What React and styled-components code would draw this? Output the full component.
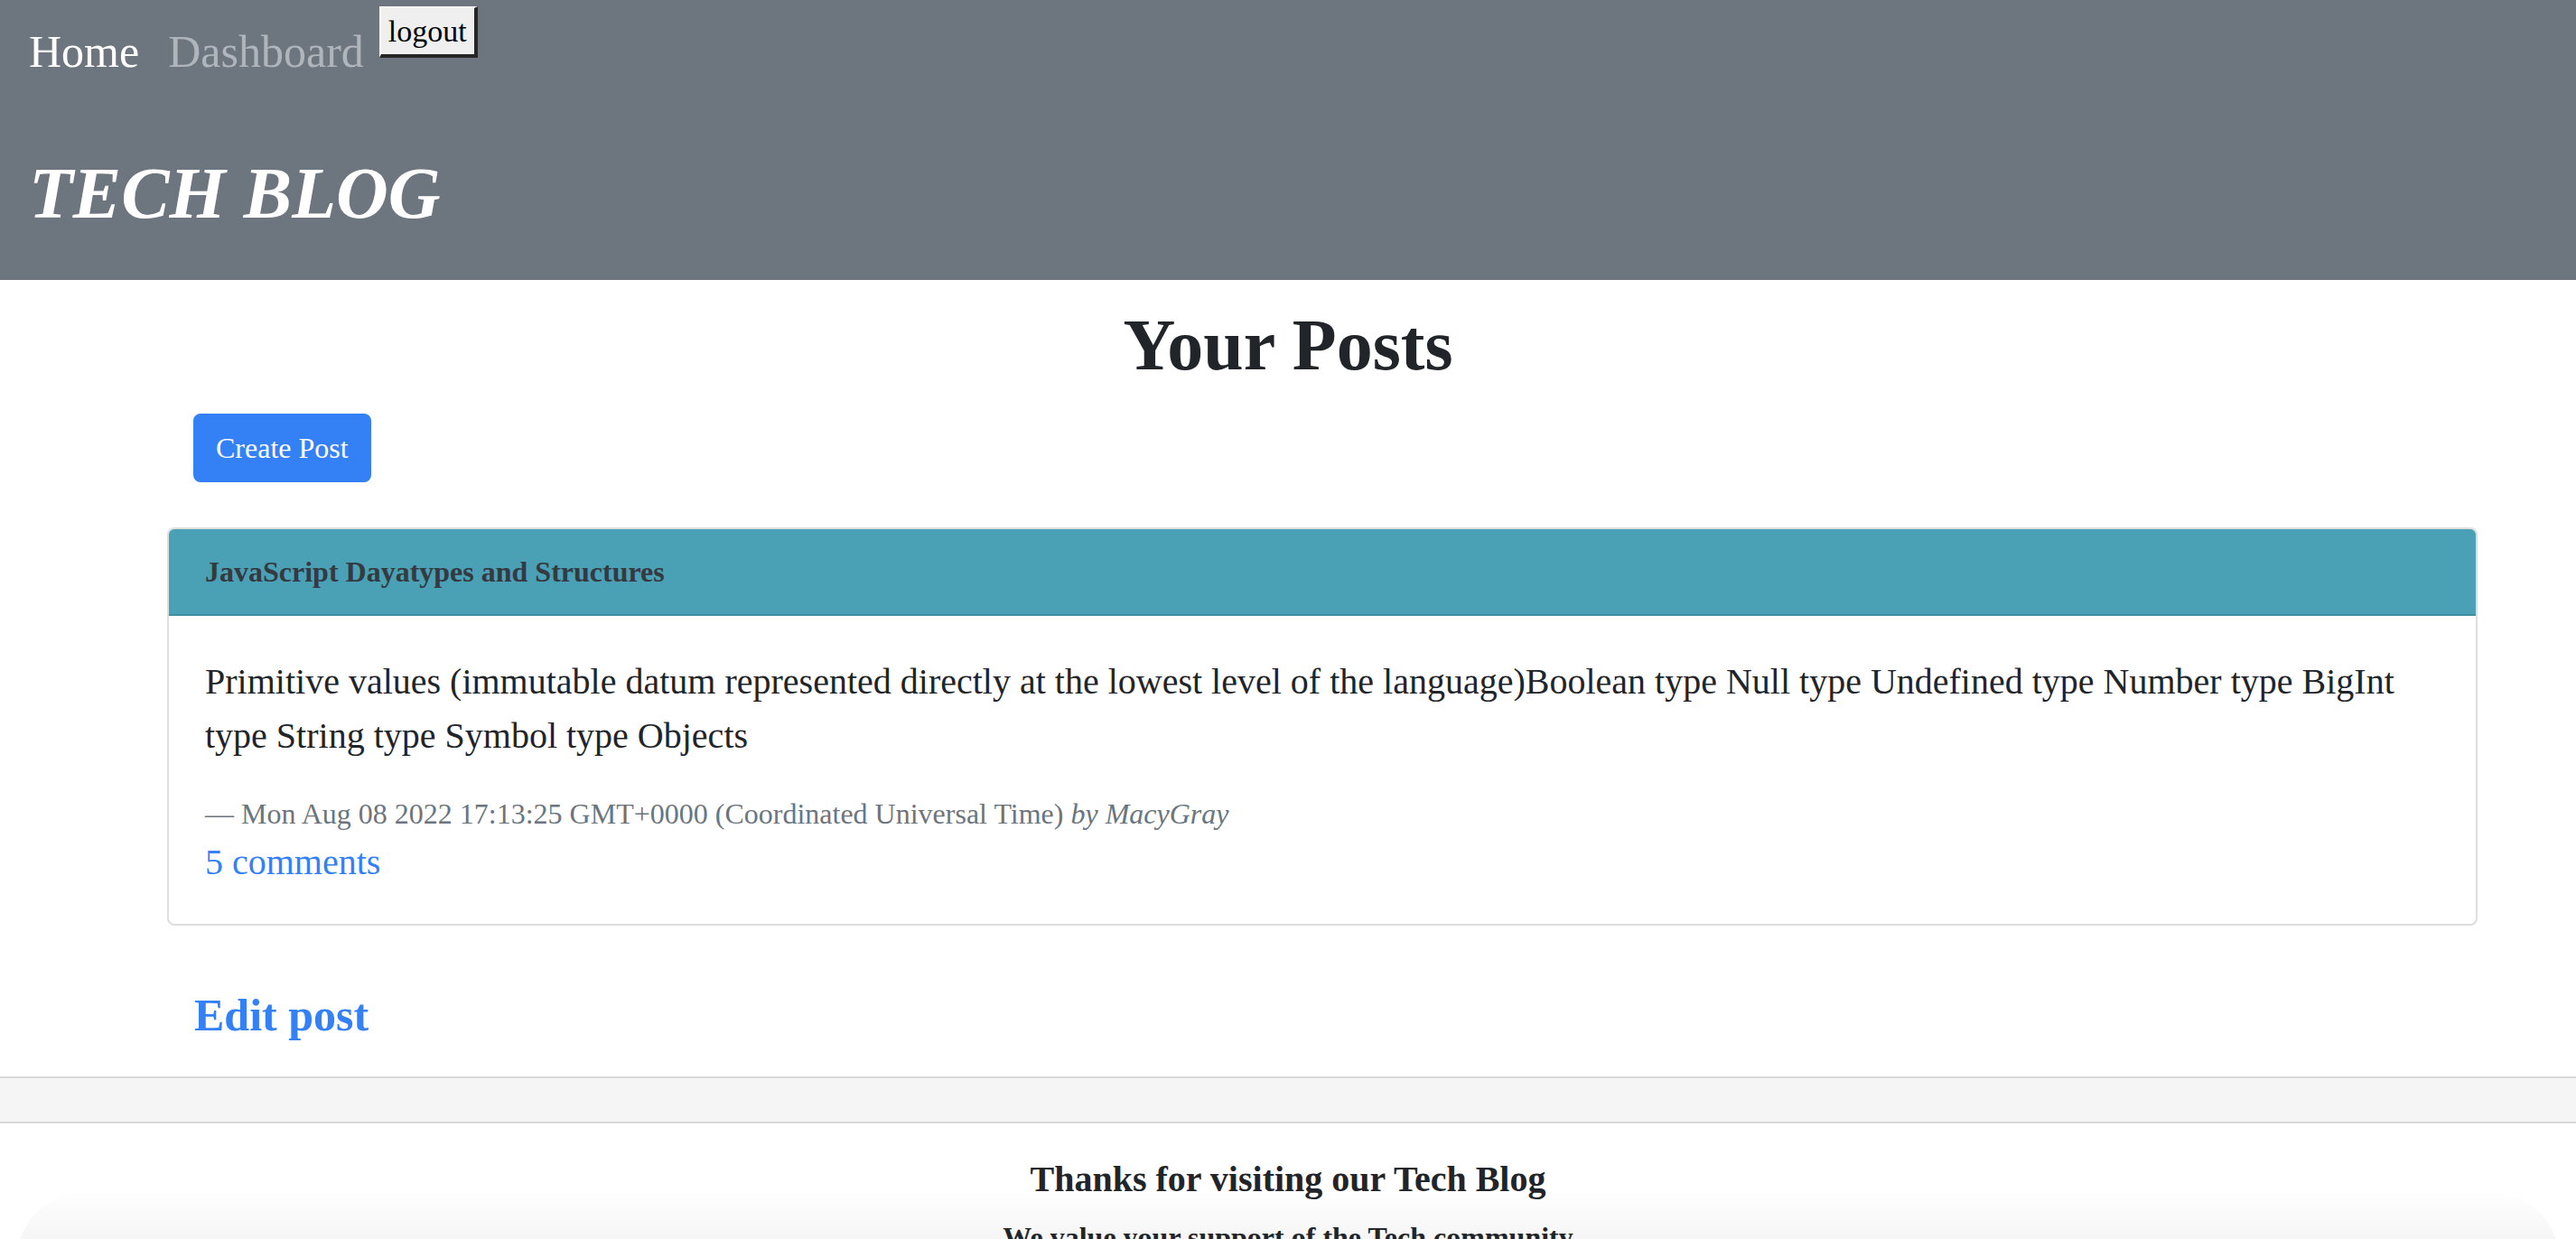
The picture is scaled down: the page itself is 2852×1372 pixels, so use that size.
import styled, { createGlobalStyle } from 'styled-components';

const GlobalStyle = createGlobalStyle`
  body {
    margin: 0;
    font-family: "Liberation Serif", "Times New Roman", serif;
    color: #212529;
    background: #fff;
  }
`;

const Header = styled.header`
  background: #6d757e;
  height: 310px;
  box-sizing: border-box;
  padding: 7px 0 0 32px;
`;

const Nav = styled.nav`
  display: flex;
  align-items: flex-start;
`;

const NavLink = styled.a`
  font-size: 50px;
  line-height: 75px;
  margin-top: 13px;
  margin-right: 32px;
  color: ${props => (props.active ? '#fff' : '#b0b5bb')};
  text-decoration: none;
  white-space: nowrap;
`;

const LogoutButton = styled.button`
  font-family: "Liberation Serif", "Times New Roman", serif;
  font-size: 34px;
  line-height: 39px;
  height: 57px;
  padding: 4px 8px;
  margin-left: -15px;
  background: #efefef;
  color: #000;
  border-style: solid;
  border-width: 2px 4px 4px 2px;
  border-color: #f4f4f4 #262626 #262626 #f4f4f4;
`;

const SiteTitle = styled.h1`
  margin: 71px 0 0;
  font-size: 80px;
  line-height: 96px;
  font-weight: 700;
  font-style: italic;
  color: #fff;
`;

const PageTitle = styled.h1`
  margin: 24px 0 0;
  text-align: center;
  font-size: 80px;
  line-height: 96px;
  font-weight: 700;
  color: #212529;
`;

const Content = styled.main`
  padding: 0 109px 0 185px;
`;

const CreateButton = styled.button`
  display: block;
  margin: 28px 0 0 29px;
  padding: 12px 23px;
  font-family: "Liberation Serif", "Times New Roman", serif;
  font-size: 32px;
  line-height: 48px;
  color: #fff;
  background: #3480f5;
  border: 2px solid #3480f5;
  border-radius: 8px;
`;

const Card = styled.article`
  margin-top: 50px;
  border: 2px solid #dedede;
  border-radius: 8px;
  overflow: hidden;
`;

const CardHeader = styled.div`
  background: #4aa0b5;
  border-bottom: 2px solid #3f8fa3;
  padding: 23px 40px;
  font-size: 32px;
  line-height: 48px;
  font-weight: 700;
  color: #343a40;
`;

const CardBody = styled.div`
  padding: 43px 40px 38px;
`;

const PostText = styled.p`
  margin: 0 0 32px;
  font-size: 40px;
  line-height: 60px;
  color: #212529;
`;

const Meta = styled.div`
  font-size: 32px;
  line-height: 48px;
  color: #6c757d;

  & em {
    font-style: italic;
  }
`;

const CommentsLink = styled.a`
  display: block;
  font-size: 40px;
  line-height: 60px;
  color: #3480f5;
  text-decoration: none;
`;

const EditLink = styled.a`
  display: inline-block;
  margin: 69px 0 0 30px;
  font-size: 50px;
  line-height: 60px;
  font-weight: 700;
  color: #3480f5;
  text-decoration: none;
`;

const FooterBand = styled.div`
  margin-top: 38px;
  height: 48px;
  background: #f5f5f5;
  border-top: 2px solid #d8d8d8;
  border-bottom: 2px solid #d8d8d8;
`;

const Footer = styled.footer`
  text-align: center;
  padding-top: 38px;
`;

const FooterTitle = styled.h2`
  margin: 0;
  font-size: 40px;
  line-height: 48px;
  font-weight: 700;
  color: #212529;
`;

const FooterNote = styled.div`
  margin: -12px 18px 0;
  padding-top: 28px;
  height: 120px;
  border-radius: 80px 80px 0 0;
  background: linear-gradient(to bottom, #fff 0%, #f6f6f6 35%, #eeeeee 100%);
  font-size: 32px;
  line-height: 48px;
  font-weight: 700;
  color: #212529;
`;

export default function App() {
  return (
    <>
      <GlobalStyle />
      <Header>
        <Nav>
          <NavLink active href="#">Home</NavLink>
          <NavLink href="#">Dashboard</NavLink>
          <LogoutButton>logout</LogoutButton>
        </Nav>
        <SiteTitle>TECH BLOG</SiteTitle>
      </Header>
      <PageTitle>Your Posts</PageTitle>
      <Content>
        <CreateButton>Create Post</CreateButton>
        <Card>
          <CardHeader>JavaScript Dayatypes and Structures</CardHeader>
          <CardBody>
            <PostText>
              Primitive values (immutable datum represented directly at the lowest level of the
              language)Boolean type Null type Undefined type Number type BigInt type String type
              Symbol type Objects
            </PostText>
            <Meta>
              — Mon Aug 08 2022 17:13:25 GMT+0000 (Coordinated Universal Time) <em>by MacyGray</em>
            </Meta>
            <CommentsLink href="#">5 comments</CommentsLink>
          </CardBody>
        </Card>
        <EditLink href="#">Edit post</EditLink>
      </Content>
      <FooterBand />
      <Footer>
        <FooterTitle>Thanks for visiting our Tech Blog</FooterTitle>
        <FooterNote>We value your support of the Tech community</FooterNote>
      </Footer>
    </>
  );
}
